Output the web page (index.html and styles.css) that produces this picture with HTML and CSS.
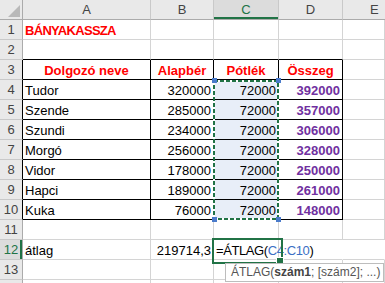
FILE: index.html
```html
<!DOCTYPE html>
<html lang="hu">
<head>
<meta charset="utf-8">
<title>Bányakassza</title>
<link rel="stylesheet" href="styles.css">
</head>
<body>
<div class="sheet">
  <div class="corner"><svg width="22" height="19" viewBox="0 0 22 19"><polygon points="8,17 20,17 20,5" fill="#b9b9b9"/></svg></div>
  <div class="ch">A</div><div class="ch">B</div><div class="ch sel">C</div><div class="ch">D</div><div class="ch cut">E</div>

  <div class="rh">1</div><div class="c title">BÁNYAKASSZA</div><div class="c"></div><div class="c"></div><div class="c"></div><div class="c"></div>

  <div class="rh">2</div><div class="c top"></div><div class="c top"></div><div class="c top"></div><div class="c top"></div><div class="c"></div>

  <div class="rh tb">3</div><div class="c t hd">Dolgozó neve</div><div class="c t hd">Alapbér</div><div class="c t hd">Pótlék</div><div class="c t hd">Összeg</div><div class="c"></div>

  <div class="rh tb">4</div><div class="c t">Tudor</div><div class="c t num">320000</div><div class="c t num ref">72000</div><div class="c t num sum">392000</div><div class="c"></div>
  <div class="rh tb">5</div><div class="c t">Szende</div><div class="c t num">285000</div><div class="c t num ref">72000</div><div class="c t num sum">357000</div><div class="c"></div>
  <div class="rh tb">6</div><div class="c t">Szundi</div><div class="c t num">234000</div><div class="c t num ref">72000</div><div class="c t num sum">306000</div><div class="c"></div>
  <div class="rh tb">7</div><div class="c t">Morgó</div><div class="c t num">256000</div><div class="c t num ref">72000</div><div class="c t num sum">328000</div><div class="c"></div>
  <div class="rh tb">8</div><div class="c t">Vidor</div><div class="c t num">178000</div><div class="c t num ref">72000</div><div class="c t num sum">250000</div><div class="c"></div>
  <div class="rh tb">9</div><div class="c t">Hapci</div><div class="c t num">189000</div><div class="c t num ref">72000</div><div class="c t num sum">261000</div><div class="c"></div>
  <div class="rh tb">10</div><div class="c t">Kuka</div><div class="c t num">76000</div><div class="c t num ref">72000</div><div class="c t num sum">148000</div><div class="c"></div>

  <div class="rh">11</div><div class="c"></div><div class="c"></div><div class="c"></div><div class="c"></div><div class="c"></div>

  <div class="rh sel">12</div><div class="c">átlag</div><div class="c num">219714,3</div><div class="c active">=ÁTLAG(<span class="rng">C4:C10</span>)</div><div class="c spill"></div><div class="c spill"></div>

  <div class="rh">13</div><div class="c"></div><div class="c"></div><div class="c"></div><div class="c"></div><div class="c"></div>
  <div class="rh last"></div><div class="c last"></div><div class="c last"></div><div class="c last"></div><div class="c last"></div><div class="c last"></div>

  <!-- referenced range C4:C10: marching-ants frame with corner handles -->
  <svg class="marquee" width="72" height="146" viewBox="0 0 72 146">
    <rect x="4" y="4" width="64" height="138" fill="none" stroke="#ffffff" stroke-width="2"/>
    <rect x="4" y="4" width="64" height="138" fill="none" stroke="#217346" stroke-width="2" stroke-dasharray="4 2"/>
    <rect x="2" y="1" width="5" height="5" fill="#4a7bcb"/>
    <rect x="66" y="1" width="5" height="5" fill="#4a7bcb"/>
    <rect x="2" y="140" width="5" height="5" fill="#4a7bcb"/>
    <rect x="66" y="140" width="5" height="5" fill="#4a7bcb"/>
  </svg>

  <div class="tip">ÁTLAG(<b>szám1</b>; [szám2]; ...)</div>
</div>
</body>
</html>
```

FILE: styles.css
```css
* {
  box-sizing: border-box;
}

html,
body {
  margin: 0;
  padding: 0;
  background: #ffffff;
  overflow: hidden;
}

body {
  width: 385px;
  height: 283px;
  font-family: "Liberation Sans", Arial, sans-serif;
  font-size: 13px;
  color: #000000;
}

.sheet {
  position: relative;
  display: grid;
  grid-template-columns: 23px 128px 63px 65px 64px 42px;
  grid-template-rows: repeat(14, 20px) 3px;
  width: 385px;
  height: 283px;
  overflow: hidden;
}

/* headers */
.corner {
  background: #e9e9e9;
  border-right: 1px solid #ababab;
  border-bottom: 1px solid #ababab;
}

.corner svg {
  display: block;
}

.ch {
  background: #e9e9e9;
  border-right: 1px solid #c9c9c9;
  border-bottom: 1px solid #ababab;
  color: #444444;
  text-align: center;
  line-height: 20px;
}

/* the last column is only partly in view; keep its letter where a full-width column centres it */
.ch.cut {
  border-right: 0;
  text-align: left;
  padding-left: 27px;
}

.ch.sel {
  background: #dcdcdc;
  color: #217346;
  box-shadow: inset 0 -2px 0 #217346;
}

.rh {
  background: #e9e9e9;
  border-right: 1px solid #ababab;
  border-bottom: 1px solid #c9c9c9;
  color: #444444;
  text-align: center;
  line-height: 20px;
}

.rh.tb {
  border-right-color: #000000;
}

.rh.sel {
  background: #dcdcdc;
  color: #217346;
  box-shadow: inset -2px 0 0 #217346;
}

/* cells */
.c {
  border-right: 1px solid #d4d4d4;
  border-bottom: 1px solid #d4d4d4;
  padding: 1px 2px 0;
  line-height: 19px;
  white-space: nowrap;
  overflow: hidden;
}

.c.top {
  border-bottom-color: #000000;
}

.c.t {
  border-right-color: #000000;
  border-bottom-color: #000000;
}

.last {
  border-bottom: 0;
}

.title {
  color: #ff0000;
  font-weight: bold;
  letter-spacing: -0.7px;
}

.hd {
  color: #ff0000;
  font-weight: bold;
  text-align: center;
}

.num {
  text-align: right;
}

.ref {
  background: #e8eef8;
}

.sum {
  color: #7030a0;
  font-weight: bold;
}

.spill {
  border-right-color: transparent;
}

.active {
  position: relative;
  overflow: visible;
  letter-spacing: -0.4px;
}

.active::after {
  content: "";
  position: absolute;
  left: -2px;
  top: -2px;
  width: 67px;
  height: 22px;
  border: 2px solid #217346;
}

.active::before {
  content: "";
  position: absolute;
  left: 62px;
  top: 17px;
  width: 6px;
  height: 6px;
  background: #217346;
  border: 1px solid #ffffff;
  z-index: 1;
}

.rng {
  color: #3b6fc4;
}

.marquee {
  position: absolute;
  left: 210px;
  top: 77px;
}

.tip {
  position: absolute;
  left: 225px;
  top: 263px;
  width: 159px;
  height: 19px;
  padding: 0 5px;
  background: #ffffff;
  border: 1px solid #bdbdbd;
  color: #555555;
  font-size: 12px;
  line-height: 17px;
  white-space: nowrap;
  z-index: 2;
}

.tip b {
  color: #444444;
}
```
